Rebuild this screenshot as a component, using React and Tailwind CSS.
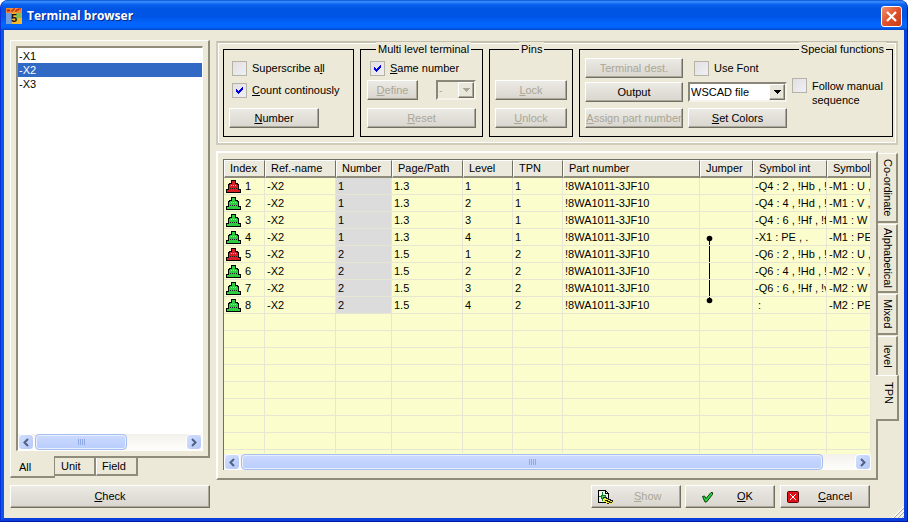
import clsx from "clsx";

const columns = [
  { title: "Index", width: "w-[41px]" },
  { title: "Ref.-name", width: "w-[71px]" },
  { title: "Number", width: "w-[56px]" },
  { title: "Page/Path", width: "w-[71px]" },
  { title: "Level", width: "w-[50px]" },
  { title: "TPN", width: "w-[50px]" },
  { title: "Part number", width: "w-[137px]" },
  { title: "Jumper", width: "w-[53px]" },
  { title: "Symbol int", width: "w-[74px]" },
  { title: "Symbol", width: "" },
];

const terminals = [
  { index: 1, number: 1, path: "1.3", level: 1, jumper: null, int: "-Q4 : 2 , !Hb , !h", ext: "-M1 : U ," },
  { index: 2, number: 1, path: "1.3", level: 2, jumper: null, int: "-Q4 : 4 , !Hd , !h", ext: "-M1 : V ," },
  { index: 3, number: 1, path: "1.3", level: 3, jumper: null, int: "-Q4 : 6 , !Hf , !fv", ext: "-M1 : W" },
  { index: 4, number: 1, path: "1.3", level: 4, jumper: "start", int: "-X1 : PE , .", ext: "-M1 : PE" },
  { index: 5, number: 2, path: "1.5", level: 1, jumper: "line", int: "-Q6 : 2 , !Hb , !v", ext: "-M2 : U ," },
  { index: 6, number: 2, path: "1.5", level: 2, jumper: "line", int: "-Q6 : 4 , !Hd , !v", ext: "-M2 : V ," },
  { index: 7, number: 2, path: "1.5", level: 3, jumper: "line", int: "-Q6 : 6 , !Hf , !v", ext: "-M2 : W" },
  { index: 8, number: 2, path: "1.5", level: 4, jumper: "end", int: " :", ext: "-M2 : PE" },
];

const emptyRows = [9, 10, 11, 12, 13, 14, 15, 16, 17];

const raised = "border border-t-white border-l-white border-r-[#716f64] border-b-[#716f64] shadow-[inset_-1px_-1px_0_#aca899]";

function Button({ children, className, disabled, align = "justify-center" }) {
  return (
    <button
      type="button"
      disabled={disabled}
      className={clsx(
        "flex items-center whitespace-nowrap bg-linear-to-b from-[#eceae4] to-[#d9d5cf]",
        raised,
        align,
        disabled ? "text-[#aaa796]" : "text-black",
        className
      )}
    >
      {children}
    </button>
  );
}

function Checkbox({ id, checked, children, className }) {
  return (
    <div className={clsx("flex items-center gap-[5px]", className)}>
      <span className="relative h-[15px] w-[15px] shrink-0">
        <input
          id={id}
          type="checkbox"
          defaultChecked={checked}
          className="peer block h-[15px] w-[15px] appearance-none border border-[#b5b2a6] bg-linear-to-br from-[#e2e0e2] to-[#f0eff4]"
        />
        <svg
          viewBox="0 0 15 15"
          shapeRendering="crispEdges"
          className="pointer-events-none absolute inset-0 hidden peer-checked:block"
        >
          <path d="M4 6h1v1h1v1h1v-1h1v-1h1v-1h1v-1h1v3h-1v1h-1v1h-1v1h-1v1h-1v-1h-1v-1h-1z" fill="#0000e0" />
        </svg>
      </span>
      <label htmlFor={id}>{children}</label>
    </div>
  );
}

function Select({ label, value, disabled, className }) {
  return (
    <div className={clsx("relative h-5", className)}>
      <select
        aria-label={label}
        disabled={disabled}
        className={clsx(
          "h-full w-full appearance-none border-2 border-t-[#8a877a] border-l-[#8a877a] border-r-[#f6f4ea] border-b-[#f6f4ea] pl-px leading-4 opacity-100",
          disabled ? "bg-[#ece9d8] text-[#aaa796]" : "bg-white text-black"
        )}
      >
        <option>{value}</option>
      </select>
      <span
        className={clsx(
          "pointer-events-none absolute top-0.5 right-0.5 bottom-0.5 flex w-4 items-center justify-center bg-[#e9e6dc]",
          raised
        )}
      >
        <svg width="7" height="4" viewBox="0 0 7 4" shapeRendering="crispEdges">
          <path d="M0 0h7v1h-1v1h-1v1h-1v1h-1v-1h-1v-1h-1v-1h-1z" fill={disabled ? "#aaa796" : "#000"} />
        </svg>
      </span>
    </div>
  );
}

function Group({ legend, legendClass, className, children }) {
  return (
    <fieldset className={clsx("relative border border-black py-2", className)}>
      {legend && (
        <legend className={clsx("absolute -top-2 bg-[#ece9d8] px-0.5 leading-[14px] whitespace-nowrap", legendClass)}>
          {legend}
        </legend>
      )}
      {children}
    </fieldset>
  );
}

function ScrollArrow({ label, flip }) {
  return (
    <button
      type="button"
      aria-label={label}
      className="flex h-4 w-4 shrink-0 items-center justify-center rounded-sm border border-white bg-linear-to-br from-[#d3e0ff] to-[#b4c8f6]"
    >
      <svg width="8" height="9" viewBox="0 0 8 9" className={clsx(flip && "rotate-180")}>
        <path d="M6 1L2.5 4.5L6 8" fill="none" stroke="#4d6185" strokeWidth="2" />
      </svg>
    </button>
  );
}

function Scrollbar({ thumb, className }) {
  return (
    <div className={clsx("flex h-4 bg-linear-to-b from-[#f3f1ec] to-[#fefefb]", className)}>
      <ScrollArrow label="Scroll left" />
      <div className="min-w-0 flex-1 px-px">
        <div
          className={clsx(
            "flex h-4 items-center justify-center gap-px rounded-sm border border-[#a6bdf0] bg-linear-to-b from-[#cbdaff] to-[#b9cdfb] shadow-[inset_0_0_0_1px_#e8efff]",
            thumb
          )}
        >
          {[0, 1, 2, 3].map((n) => (
            <span key={n} className="h-1.5 w-px bg-[#8fa9e4]" />
          ))}
        </div>
      </div>
      <ScrollArrow label="Scroll right" flip />
    </div>
  );
}

function TerminalIcon({ color }) {
  return (
    <svg width="15" height="13" viewBox="0 0 15 13" shapeRendering="crispEdges" className="shrink-0">
      <path d="M5 0h5v3h2v1h1v5h2v4H0V9h2V4h1V3h2z" fill="#000" />
      <path d="M6 1h3v3h2v1h1v5h2v2H1v-2h2V5h1V4h2z" fill={color} />
      <path d="M5 5.5h1M7 5.5h1M9 5.5h1" stroke="#c9c9c9" />
      <path d="M4 8.5h1M6 8.5h1M8 8.5h1M10 8.5h1" stroke="#222" />
    </svg>
  );
}

function Jumper({ part }) {
  return (
    <svg width="20" height="17" viewBox="0 0 20 17" className="block">
      {part === "start" && (
        <>
          <circle cx="7.5" cy="9.5" r="2.8" />
          <path d="M7 10h1v6h-1z" />
        </>
      )}
      {part === "line" && <path d="M7 0h1v16h-1z" />}
      {part === "end" && (
        <>
          <circle cx="7.5" cy="3.5" r="2.8" />
          <path d="M7 0h1v3h-1z" />
        </>
      )}
    </svg>
  );
}

function AppIcon() {
  return (
    <svg width="16" height="16" viewBox="0 0 16 16" className="shrink-0">
      <path d="M0 0h16v16H0z" fill="#f5b92c" />
      <path d="M0 0h16v5H0z" fill="#ee8a35" />
      <path d="M0 5h6v11H0z" fill="#6f9fe0" />
      <path d="M10 5h6v5h-6z" fill="#8dbb58" />
      <path d="M1 1.5l1 2 1-2 1 2M5 3h2v-2h2M9 3h2v-2M12 3v-2h3" fill="none" stroke="#b51a10" />
      <text x="5" y="14" fontSize="11" fontWeight="bold" fontFamily="Liberation Sans, sans-serif" fill="#111">
        5
      </text>
    </svg>
  );
}

function TitleBar() {
  return (
    <header className="flex h-[30px] items-center rounded-t-lg bg-[linear-gradient(to_bottom,#0a4fd6_0%,#3b93ff_6%,#0a62ef_14%,#0054e3_30%,#0055e5_55%,#0366ff_80%,#0262f5_92%,#0043c9_100%)] px-[5px] pt-0.5">
      <AppIcon />
      <h1 className="ml-[5px] font-['Open_Sans',sans-serif] text-[12px] font-bold text-white [text-shadow:1px_1px_0_#0a2a8c]">
        Terminal browser
      </h1>
      <button
        type="button"
        aria-label="Close"
        className="ml-auto flex h-[21px] w-[21px] items-center justify-center rounded-[3px] border border-white bg-linear-to-br from-[#f0906f] via-[#e0502a] to-[#c83c14]"
      >
        <svg width="13" height="13" viewBox="0 0 13 13">
          <path d="M2 2l9 9M11 2l-9 9" stroke="#fff" strokeWidth="2.2" />
        </svg>
      </button>
    </header>
  );
}

function Sidebar() {
  return (
    <aside className="flex w-[200px] shrink-0 flex-col pt-2.5">
      <div className="flex flex-1 flex-col border-t border-l border-r-2 border-b-2 border-t-white border-l-white border-r-[#8f8c7c] border-b-[#8f8c7c] p-[5px]">
        <div className="flex flex-1 flex-col border-t-2 border-l-2 border-r border-b border-t-[#8f8c7c] border-l-[#8f8c7c] border-r-white border-b-white bg-white">
          <ul className="flex-1 pt-px leading-[14px]">
            <li className="pl-px">-X1</li>
            <li className="bg-[#316ac5] pl-px text-white">-X2</li>
            <li className="pl-px">-X3</li>
          </ul>
          <Scrollbar thumb="w-[92px]" />
        </div>
      </div>
      <div role="tablist" className="flex h-5 items-start">
        <button
          type="button"
          role="tab"
          aria-selected="true"
          className="-mt-0.5 h-[22px] w-[45px] border-l border-r border-b-2 border-l-white border-r-[#8f8c7c] border-b-[#8f8c7c] bg-[#ece9d8] pt-0.5 pl-2 text-left"
        >
          All
        </button>
        <button
          type="button"
          role="tab"
          className="h-[18px] w-[41px] border-r-2 border-b-2 border-[#8f8c7c] pl-1.5 text-left"
        >
          Unit
        </button>
        <button
          type="button"
          role="tab"
          className="h-[18px] w-[42px] border-l border-r-2 border-b-2 border-l-white border-r-[#8f8c7c] border-b-[#8f8c7c] pl-[5px] text-left"
        >
          Field
        </button>
      </div>
      <Button className="mt-[7px] mb-2.5 h-[23px]">
        <span><u>C</u>heck</span>
      </Button>
    </aside>
  );
}

function Toolbar() {
  return (
    <div className="mr-1.5 flex gap-1.5 border-2 border-[#cfccbb] border-t-[#c2bfae] bg-[#ece9d8] py-1.5 pr-[3px] pl-[5px] shadow-[inset_1px_1px_0_#fff,inset_-1px_-1px_0_#fff]">
      <Group className="w-[131px] pl-[5px]">
        <Checkbox id="superscribe" className="h-5 pl-[3px]">
          Superscribe a<u>l</u>l
        </Checkbox>
        <Checkbox id="count" checked className="mt-0.5 h-5 pl-[3px]">
          <u>C</u>ount continously
        </Checkbox>
        <Button className="mt-2 h-5 w-[90px]">
          <span><u>N</u>umber</span>
        </Button>
      </Group>

      <Group legend="Multi level terminal" legendClass="left-[15px]" className="w-[123px] px-1.5">
        <Checkbox id="same" checked className="h-5 pl-[3px]">
          <u>S</u>ame number
        </Checkbox>
        <div className="mt-0.5 flex justify-between">
          <Button disabled className="h-5 w-[51px]">
            <span><u>D</u>efine</span>
          </Button>
          <Select label="Level separator" value="-" disabled className="w-10" />
        </div>
        <Button disabled className="mt-2 h-5 w-full">
          <span><u>R</u>eset</span>
        </Button>
      </Group>

      <Group legend="Pins" legendClass="left-[29px]" className="w-[84px] px-[5px]">
        <Button disabled className="mt-[22px] h-5 w-full">
          <span><u>L</u>ock</span>
        </Button>
        <Button disabled className="mt-2 h-5 w-full">
          <span><u>U</u>nlock</span>
        </Button>
      </Group>

      <Group legend="Special functions" legendClass="right-1.5" className="flex flex-1 gap-[5px] pl-[5px]">
        <div className="flex w-[98px] flex-col">
          <Button disabled className="h-5">Terminal dest.</Button>
          <Button className="mt-1 h-5">Output</Button>
          <Button disabled className="mt-1.5 h-5">
            <span><u>A</u>ssign part number</span>
          </Button>
        </div>
        <div className="flex w-[99px] flex-col">
          <Checkbox id="font" className="h-5 pl-1.5">Use Font</Checkbox>
          <Select label="Output format" value="WSCAD file" className="mt-1" />
          <Button className="mt-1.5 h-5">
            <span><u>S</u>et Colors</span>
          </Button>
        </div>
        <Checkbox id="follow" className="items-start self-start pt-5 leading-[14px]">
          <span className="block pt-px">
            Follow manual
            <br />
            sequence
          </span>
        </Checkbox>
      </Group>
    </div>
  );
}

function TerminalTable() {
  const cell = "h-[17px] overflow-hidden border-r border-b border-[#e6e6d2] p-0 pl-0.5 whitespace-pre";

  return (
    <table className="w-full table-fixed border-separate border-spacing-0 text-left leading-4">
      <thead>
        <tr>
          {columns.map((col) => (
            <th
              key={col.title}
              className={clsx(
                "h-[18px] overflow-hidden border-t border-r border-b-2 border-l border-t-white border-r-[#716f64] border-b-[#8f8c7c] border-l-white bg-[#ebe8dc] p-0 pl-[5px] leading-[15px] font-normal whitespace-nowrap",
                col.width
              )}
            >
              {col.title}
            </th>
          ))}
        </tr>
      </thead>
      <tbody>
        {terminals.map((t) => (
          <tr key={t.index}>
            <td className={cell}>
              <span className="flex h-4 items-center gap-1">
                <TerminalIcon color={t.level === 1 ? "#d81e22" : "#2ecc40"} />
                {t.index}
              </span>
            </td>
            <td className={cell}>-X2</td>
            <td className={clsx(cell, "bg-[#dcdcdc]")}>{t.number}</td>
            <td className={cell}>{t.path}</td>
            <td className={cell}>{t.level}</td>
            <td className={cell}>{t.number}</td>
            <td className={cell}>!8WA1011-3JF10</td>
            <td className={cell}>
              <div className="h-4">{t.jumper && <Jumper part={t.jumper} />}</div>
            </td>
            <td className={cell}>{t.int}</td>
            <td className={cell}>{t.ext}</td>
          </tr>
        ))}
        {emptyRows.map((row) => (
          <tr key={row}>
            {columns.map((col) => (
              <td
                key={col.title}
                className={clsx("border-r border-[#e6e6d2] p-0", row === 17 ? "h-[3px]" : "h-[17px] border-b")}
              />
            ))}
          </tr>
        ))}
      </tbody>
    </table>
  );
}

const sideTabs = [
  { title: "Co-ordinate", height: "h-[70px]" },
  { title: "Alphabetical", height: "h-[69px]" },
  { title: "Mixed", height: "h-[41px]" },
  { title: "level", height: "h-[41px]" },
  { title: "TPN", height: "h-[46px]", selected: true },
];

function SideTabs() {
  return (
    <div role="tablist" aria-orientation="vertical" className="flex w-[26px] shrink-0 flex-col items-start gap-px pt-0.5">
      {sideTabs.map((tab) => (
        <button
          key={tab.title}
          type="button"
          role="tab"
          aria-selected={!!tab.selected}
          className={clsx(
            "flex items-center border-t border-r-2 border-t-white border-r-[#8f8c7c] border-b-2 border-b-[#8f8c7c] bg-[#ece9d8] [writing-mode:vertical-rl]",
            tab.height,
            tab.selected ? "-mt-[3px] -ml-0.5 w-[23px] justify-start pt-1.5 pl-1" : "w-5 justify-center pl-0.5"
          )}
        >
          {tab.title}
        </button>
      ))}
    </div>
  );
}

function Footer() {
  return (
    <div className="mt-[5px] mb-2.5 flex justify-end gap-1 pr-[34px]">
      <Button disabled align="justify-start" className="h-[23px] w-[90px] gap-5 pl-[5px]">
        <svg width="17" height="16" viewBox="0 0 17 16" shapeRendering="crispEdges">
          <path d="M1.5 1.5h7l3 3v9h-10z" fill="#eef3ea" stroke="#000" />
          <path d="M8.5 1.5v3h3" fill="none" stroke="#000" />
          <path d="M5.5 3v3M5.5 9v3M2 7.5h2" fill="none" stroke="#0f7d22" />
          <path d="M4 6h4v3H4z" fill="#5fd06c" stroke="#0f7d22" />
          <path d="M7 9h4v1h2v1h2v1h2v2h-2v1h-4v-1H9v-1H7z" fill="#f2e94a" />
          <path d="M6 8.5h3v1h2v1h2v1h2v1M8 11.5h2v1h2v1h2M10 14.5h2M14 13.5h1" fill="none" stroke="#222" />
        </svg>
        <span><u>S</u>how</span>
      </Button>
      <Button align="justify-start" className="h-[23px] w-[90px] gap-[22px] pl-[15px]">
        <svg width="14" height="12" viewBox="0 0 14 12">
          <path d="M1.5 5.5l2-.5L5 7.5l5-6h1.5v2l-6 7.5H4z" fill="#27d33c" stroke="#0a3d10" />
        </svg>
        <span><u>O</u>K</span>
      </Button>
      <Button align="justify-start" className="ml-px h-[23px] w-[90px] gap-[19px] pl-1.5">
        <svg width="12" height="12" viewBox="0 0 12 12">
          <rect x=".5" y=".5" width="11" height="11" rx="1" fill="#e01218" stroke="#5c0508" />
          <path d="M3 3l6 6M9 3l-6 6" stroke="#fff" />
        </svg>
        <span><u>C</u>ancel</span>
      </Button>
    </div>
  );
}

export default function App() {
  return (
    <div className="flex min-h-screen flex-col rounded-t-lg border-r border-b border-l border-[#0019a8] border-l-[#0831d9] bg-[#0a3fdc] font-['Liberation_Sans',Arial,sans-serif] text-[11px] text-black">
      <TitleBar />
      <div className="relative flex flex-1 gap-1.5 border-r-3 border-b-3 border-l-3 border-r-[#0a3fdc] border-b-[#0a3fdc] border-l-[#0a55ea] bg-[#ece9d8] pl-1.5">
        <Sidebar />
        <main className="flex min-w-0 flex-1 flex-col pt-[11px]">
          <Toolbar />
          <div className="mt-1.5 flex flex-1">
            <section className="flex min-w-0 flex-1 flex-col border-2 border-t-white border-l-white border-r-[#8f8c7c] border-b-[#8f8c7c] px-[5px] pt-1.5 pb-2">
              <div className="flex flex-1 flex-col border-t border-l border-[#716f64] bg-[#fcfdcc]">
                <div className="flex-1">
                  <TerminalTable />
                </div>
                <Scrollbar thumb="w-[95%]" />
              </div>
            </section>
            <SideTabs />
          </div>
          <Footer />
        </main>
        <svg width="12" height="12" viewBox="0 0 12 12" className="absolute right-0 bottom-0">
          <path d="M1 12L12 1M5 12L12 5M9 12L12 9" stroke="#fff" strokeWidth="1.5" />
          <path d="M2 12L12 2M6 12L12 6M10 12L12 10" stroke="#aca899" />
        </svg>
      </div>
    </div>
  );
}
